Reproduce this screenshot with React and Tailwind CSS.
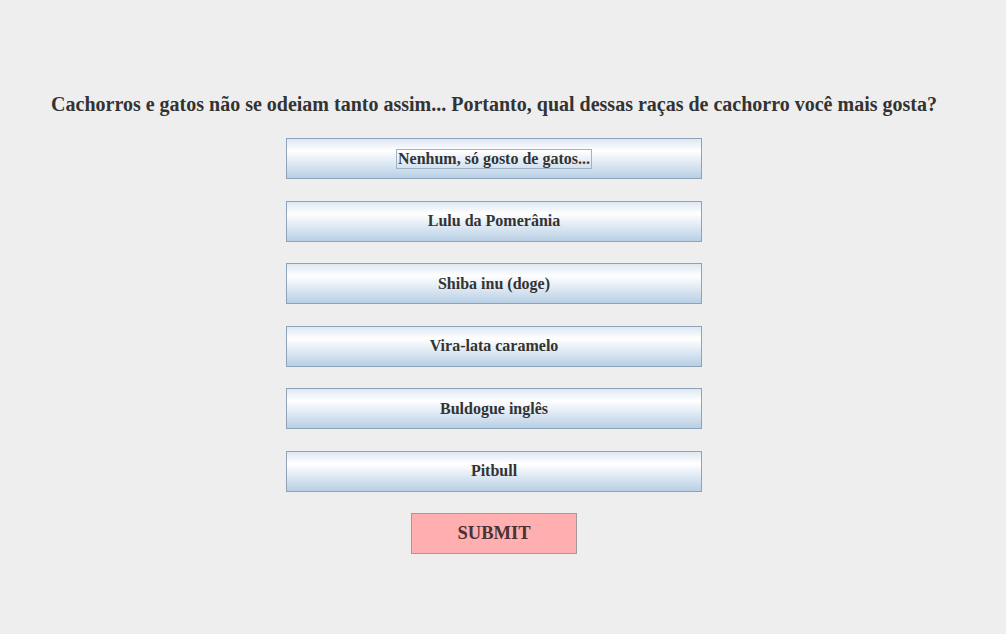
import React from 'react';

const options = [
	'Nenhum, só gosto de gatos...',
	'Lulu da Pomerânia',
	'Shiba inu (doge)',
	'Vira-lata caramelo',
	'Buldogue inglês',
	'Pitbull',
];

const App = () => {
	return (
		<div className="w-[1006px] h-[634px] bg-[#eeeeee] flex flex-col items-center pt-[91px] pr-[18px] font-['Liberation_Serif',serif] text-[#333333]">
			<h1 className="text-[20px] font-bold leading-[27px] h-[27px] whitespace-nowrap">
				Cachorros e gatos não se odeiam tanto assim... Portanto, qual dessas raças de cachorro você mais gosta?
			</h1>
			<div className="flex flex-col gap-[21.5px] mt-[20px]">
				{options.map((label, i) => (
					<button
						key={label}
						className="w-[416px] h-[41px] border border-[#8ea3b8] bg-[linear-gradient(to_bottom,#dde8f3_0%,#ffffff_30%,#e6eef7_55%,#b8cfe5_100%)] flex items-center justify-center text-[16px] font-bold"
					>
						<span className={i === 0 ? 'border border-[#9fb3c7] px-px leading-[18px]' : 'leading-[18px]'}>{label}</span>
					</button>
				))}
			</div>
			<button className="mt-[21.5px] w-[166px] h-[41px] bg-[#ffafaf] border border-[#a59a9a] text-[18.5px] font-bold text-[#4a3333]">
				SUBMIT
			</button>
		</div>
	);
};

export default App;
